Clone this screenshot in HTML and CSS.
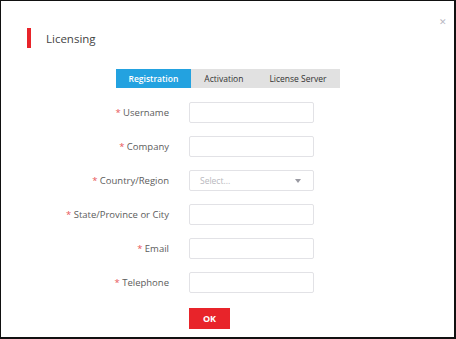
FILE: index.html
```html
<!DOCTYPE html>
<html lang="en">
<head>
    <meta charset="UTF-8">
    <meta name="viewport" content="width=device-width, initial-scale=1.0">
    <title>Licensing</title>
    <link rel="stylesheet" href="styles.css">
</head>
<body>
    <div class="dialog">
        <span class="close">&#x2715;</span>

        <div class="dialog-header">
            <span class="title-bar"></span>
            <h1>Licensing</h1>
        </div>

        <div class="tabs">
            <button class="tab active">Registration</button>
            <button class="tab">Activation</button>
            <button class="tab">License Server</button>
        </div>

        <form class="form">
            <label class="label"><span class="req">*</span> Username</label>
            <input class="field" type="text">

            <label class="label"><span class="req">*</span> Company</label>
            <input class="field" type="text">

            <label class="label"><span class="req">*</span> Country/Region</label>
            <div class="field select">
                <span class="placeholder">Select...</span>
                <span class="arrow"></span>
            </div>

            <label class="label"><span class="req">*</span> State/Province or City</label>
            <input class="field" type="text">

            <label class="label"><span class="req">*</span> Email</label>
            <input class="field" type="text">

            <label class="label"><span class="req">*</span> Telephone</label>
            <input class="field" type="text">

            <span></span>
            <div class="actions">
                <button type="button" class="ok-btn">OK</button>
            </div>
        </form>
    </div>
</body>
</html>
```

FILE: styles.css
```css
body {
    margin: 0;
    padding: 0;
    background-color: #fff;
    font-family: "Open Sans", "Noto Sans", sans-serif;
    color: #555;
}

.dialog {
    position: relative;
    width: 456px;
    height: 339px;
    box-sizing: border-box;
    border: 1px solid #111;
    border-right-width: 2px;
    border-bottom-width: 2px;
    background: #fff;
}

.close {
    position: absolute;
    top: 14px;
    right: 7px;
    font-size: 9px;
    color: #b8b8c2;
}

.dialog-header {
    display: flex;
    align-items: center;
    padding: 27px 0 0 26px;
}

.title-bar {
    width: 4px;
    height: 20px;
    background-color: #e8242a;
}

.dialog-header h1 {
    margin: 0 0 0 15px;
    font-size: 11.5px;
    font-weight: normal;
    color: #444;
}

.tabs {
    display: flex;
    justify-content: center;
    margin-top: 21px;
}

.tab {
    height: 19px;
    padding: 0 13px;
    border: none;
    background-color: #e1e1e1;
    font-family: inherit;
    font-size: 8.5px;
    color: #333;
    cursor: pointer;
}

.tab.active {
    background-color: #23a2e0;
    color: #fff;
    font-weight: 600;
}

.form {
    display: grid;
    grid-template-columns: 168px 125px;
    column-gap: 20px;
    row-gap: 13px;
    align-items: center;
    margin: 14px 0 0 0;
}

.label {
    text-align: right;
    font-size: 9.5px;
    color: #5c5c5c;
}

.req {
    color: #e8555a;
}

.field {
    height: 21px;
    box-sizing: border-box;
    border: 1px solid #e2e2e6;
    border-radius: 2px;
    margin: 0;
    padding: 0 10px;
    background: #fff;
}

.select {
    display: flex;
    align-items: center;
    justify-content: space-between;
}

.placeholder {
    font-size: 8.5px;
    color: #b8b8be;
}

.arrow {
    width: 0;
    height: 0;
    border-left: 3.5px solid transparent;
    border-right: 3.5px solid transparent;
    border-top: 4px solid #9a9aa2;
    margin-right: 2px;
}

.actions {
    margin-top: -1px;
}

.ok-btn {
    width: 41px;
    height: 21px;
    border: none;
    background-color: #e8242a;
    color: #fff;
    font-family: inherit;
    font-size: 9px;
    font-weight: 700;
    cursor: pointer;
}
```
